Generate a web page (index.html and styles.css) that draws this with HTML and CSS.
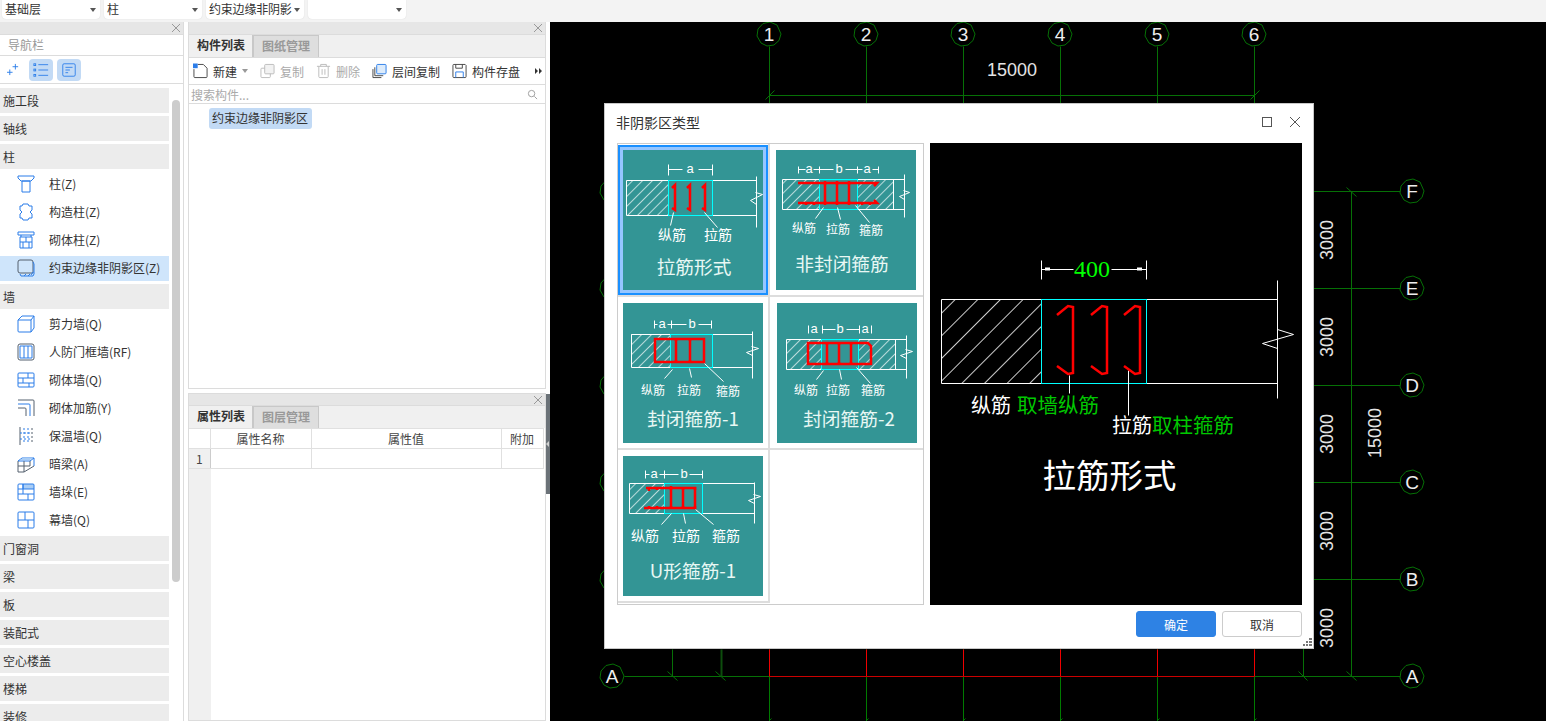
FILE: index.html
```html
<!DOCTYPE html>
<html lang="zh-CN">
  <head>
    <meta charset="UTF-8" />
    <title>非阴影区类型</title>
    <link rel="stylesheet" href="styles.css">
  </head>
  <body>
    <svg class="defs" width="0" height="0">
      <defs>
        <pattern id="hatchSmall" patternUnits="userSpaceOnUse" width="7" height="7" patternTransform="rotate(45)">
          <line x1="0" y1="0" x2="0" y2="7" stroke="#fff" stroke-width="1.3" />
        </pattern>
        <pattern id="hatchBig" patternUnits="userSpaceOnUse" width="16" height="16" patternTransform="rotate(45)">
          <line x1="0" y1="0" x2="0" y2="16" stroke="#fff" stroke-width="1.6" />
        </pattern>
        <polygon id="axisNode" points="12,0 10,6.5 5,11 -2,12 -8,9 -12,2 -11,-5 -6,-10.500 1,-12 8,-9" />
        <path id="closeMark" d="M1 1l8 8M9 1L1 9" />
      </defs>
    </svg>

    <div class="topbar">
      <div class="select">基础层<i class="caret"></i></div>
      <div class="select">柱<i class="caret"></i></div>
      <div class="select select-tight">约束边缘非阴影<i class="caret"></i></div>
      <div class="select"><i class="caret"></i></div>
    </div>

    <div class="main">
      <div class="nav">
        <div class="panel-head"><svg class="close" viewBox="0 0 10 10"><use href="#closeMark" /></svg></div>
        <div class="nav-title">导航栏</div>
        <div class="nav-tools">
          <svg class="nav-spark" viewBox="0 0 14 14"><path d="M9 1v6M6 4h6M3 7v6M0 10h6" /></svg>
          <span class="nav-tool">
            <svg viewBox="0 0 18 18"><path d="M6 3h11M6 9h11M6 15h11" /><rect x="1" y="2" width="2" height="2" /><rect x="1" y="8" width="2" height="2" /><rect x="1" y="14" width="2" height="2" /></svg>
          </span>
          <span class="nav-tool">
            <svg viewBox="0 0 18 18"><rect x="2" y="2" width="14" height="14" rx="1.500" /><path d="M5 6h8M5 9h5M5 12h3" /></svg>
          </span>
        </div>
        <div class="nav-list">
          <div class="nav-group">施工段</div>
          <div class="nav-group">轴线</div>
          <div class="nav-group">柱</div>
          <div class="nav-item">
            <svg class="icon" viewBox="0 0 18 18"><path d="M1 1h16v2l-3 3H4L1 3zM5 6h8v11H5z" /></svg>柱(Z)
          </div>
          <div class="nav-item">
            <svg class="icon" viewBox="0 0 18 18"><path d="M6 1h5l1 2h3v4l-2 2 2 2v4h-3l-1 2H6l-1-2H3v-4l2-2-2-2V3h2z" /></svg>构造柱(Z)
          </div>
          <div class="nav-item">
            <svg class="icon" viewBox="0 0 18 18"><path d="M1 1h16v3H1zM4 4v2M14 4v2M3 6h12v11H3zM3 11h12M9 6v5M6 11v6M12 11v6" /></svg>砌体柱(Z)
          </div>
          <div class="nav-item active">
            <svg class="icon" viewBox="0 0 18 18"><path class="dark" d="M3 1h11a2 2 0 0 1 2 2v11H3a2 2 0 0 1-2-2V3a2 2 0 0 1 2-2z" /><path d="M3 15l1 2h12l1-2V5l-1-2M7 17l2-2M11 17l2-2M14 16l2-3" /></svg>约束边缘非阴影区(Z)
          </div>
          <div class="nav-group">墙</div>
          <div class="nav-item">
            <svg class="icon" viewBox="0 0 18 18"><path d="M1 5h13v12H2a1 1 0 0 1-1-1zM1 5l4-4h12v12l-3 4M14 5l3-4" /></svg>剪力墙(Q)
          </div>
          <div class="nav-item">
            <svg class="icon" viewBox="0 0 18 18"><rect class="dark" x="1" y="1" width="16" height="16" rx="2" /><path d="M3 3h12v12H3zM7 3v12M11 3v12" /></svg>人防门框墙(RF)
          </div>
          <div class="nav-item">
            <svg class="icon" viewBox="0 0 18 18"><rect x="1" y="2" width="16" height="14" rx="1" /><path d="M1 7h16M1 12h16M11 2v5M6 7v5M12 12v4" /></svg>砌体墙(Q)
          </div>
          <div class="nav-item">
            <svg class="icon" viewBox="0 0 18 18"><path class="dark" d="M1 1h15a1 1 0 0 1 1 1v15" /><path d="M1 5h11a1 1 0 0 1 1 1v11" /><path class="dark" d="M1 9h7a1 1 0 0 1 1 1v7" /></svg>砌体加筋(Y)
          </div>
          <div class="nav-item">
            <svg class="icon" viewBox="0 0 18 18"><path class="dark" d="M3 0v18" /><path stroke-dasharray="2 2" d="M7 1v16M11 1v16M3 6h12M3 12h12" /><path class="dark" stroke-dasharray="2 2" d="M15 1v16" /></svg>保温墙(Q)
          </div>
          <div class="nav-item">
            <svg class="icon" viewBox="0 0 18 18"><path d="M1 6l4-3h12v8M1 6h12l4-3" /><path class="fill" d="M3 5l3-2h10l-3 2z" /><path class="dark" d="M1 6v11h6l10-6M7 6v11M1 11h12M13 6v5" /></svg>暗梁(A)
          </div>
          <div class="nav-item">
            <svg class="icon" viewBox="0 0 18 18"><path class="fill" d="M6 1h11v5H6z" /><rect x="1" y="1" width="16" height="16" rx="1" /><path d="M1 6h16M1 11h16M6 1v10M11 11v6M6 1v5" /></svg>墙垛(E)
          </div>
          <div class="nav-item">
            <svg class="icon" viewBox="0 0 18 18"><rect x="1" y="1" width="16" height="16" rx="1" /><path d="M1 9h16M8 1v8M11 9v8" /></svg>幕墙(Q)
          </div>
          <div class="nav-group">门窗洞</div>
          <div class="nav-group">梁</div>
          <div class="nav-group">板</div>
          <div class="nav-group">装配式</div>
          <div class="nav-group">空心楼盖</div>
          <div class="nav-group">楼梯</div>
          <div class="nav-group">装修</div>
        </div>
        <div class="nav-scroll"></div>
      </div>

      <div class="panels">
        <div class="panel panel-list">
          <div class="panel-head"><svg class="close" viewBox="0 0 10 10"><use href="#closeMark" /></svg></div>
          <div class="tabs">
            <div class="tab active">构件列表</div>
            <div class="tab">图纸管理</div>
          </div>
          <div class="toolbar">
            <div class="tool">
              <svg class="tool-icon" viewBox="0 0 16 16"><path class="dark" d="M5 1h6l4 4v9a1 1 0 0 1-1 1H2a1 1 0 0 1-1-1V6" /><rect class="blue-fill" x="0" y="0" width="5" height="5" /></svg>
              新建<i class="caret caret-soft"></i>
            </div>
            <div class="tool off">
              <svg class="tool-icon" viewBox="0 0 16 16"><rect x="1" y="5" width="10" height="10" rx="1" /><rect class="soft-fill" x="5" y="1" width="10" height="10" rx="1" /></svg>
              复制
            </div>
            <div class="tool off">
              <svg class="tool-icon" viewBox="0 0 16 16"><path d="M1 3h14M5 3V1h6v2M3 3v11a1 1 0 0 0 1 1h8a1 1 0 0 0 1-1V3M6.500 6v6M9.500 6v6" /></svg>
              删除
            </div>
            <div class="tool">
              <svg class="tool-icon" viewBox="0 0 16 16"><path class="dark" d="M1 6v9h9M3 4v9h9" /><rect class="blue-box" x="5" y="1" width="10" height="10" rx="1" /></svg>
              层间复制
            </div>
            <div class="tool">
              <svg class="tool-icon" viewBox="0 0 16 16"><path class="dark" d="M1 2a1 1 0 0 1 1-1h12l1 1v12a1 1 0 0 1-1 1H2a1 1 0 0 1-1-1zM4 1v4h7V1" /><path class="blue-line" d="M4 15V9h8v6" /></svg>
              构件存盘
            </div>
            <svg class="more" viewBox="0 0 8 8"><path d="M1 1l3 3-3 3zM5 1l3 3-3 3z" /></svg>
          </div>
          <div class="search">
            <input class="search-input" type="text" placeholder="搜索构件..." />
            <svg class="search-icon" viewBox="0 0 12 12"><circle cx="5" cy="5" r="3.500" /><path d="M8 8l3 3" /></svg>
          </div>
          <div class="tree">
            <span class="tree-node">约束边缘非阴影区</span>
          </div>
        </div>

        <div class="panel panel-props">
          <div class="panel-head"><svg class="close" viewBox="0 0 10 10"><use href="#closeMark" /></svg></div>
          <div class="tabs">
            <div class="tab active">属性列表</div>
            <div class="tab">图层管理</div>
          </div>
          <table class="props-table">
            <thead>
              <tr><th class="col-no"></th><th class="col-name">属性名称</th><th class="col-value">属性值</th><th class="col-extra">附加</th></tr>
            </thead>
            <tbody>
              <tr><td class="row-no">1</td><td></td><td></td><td></td></tr>
            </tbody>
          </table>
          <div class="props-rest"><div class="props-gutter"></div></div>
        </div>
      </div>

      <div class="splitter"><div class="splitter-handle"></div></div>

      <div class="canvas">
        <svg class="drawing" viewBox="550 22 996 699">
          <g class="axis">
            <path d="M769 46V649M866 46V649M963 46V649M1060 46V649M1157 46V649M1254 46V649" />
            <path d="M769 95H1254M765 99l9-9M1250 99l9-9" />
            <path d="M624 191H1400M624 288H1400M624 385H1400M624 482H1400M624 579H1400" />
            <path d="M1351 191V676M1346 187l10 9M1303 640V676M1298 671l9 9M1346 671l10 9" />
            <path d="M624 676H769M1254 676H1400M667 671l10 9M715 671l10 9M672 649V676" />
            <path class="axis-thick" d="M721 649V676" />
            <path class="axis-low" d="M769 676V721M866 676V721M963 676V721M1060 676V721M1157 676V721M1254 676V721M769 720l2-2M866 720l2-2M963 720l2-2M1060 720l2-2M1157 720l2-2M1254 720l2-2" />
          </g>
          <path class="axis-red" d="M769 649V676M866 649V676M963 649V676M1060 649V676M1157 649V676M1254 649V676" />
          <path class="axis-red axis-red-low" d="M769 676H1254" />
          <g class="nodes">
            <use href="#axisNode" x="769" y="34" /><use href="#axisNode" x="866" y="34" />
            <use href="#axisNode" x="963" y="34" /><use href="#axisNode" x="1060" y="34" />
            <use href="#axisNode" x="1157" y="34" /><use href="#axisNode" x="1254" y="34" />
            <use href="#axisNode" x="1412" y="191" /><use href="#axisNode" x="1412" y="288" />
            <use href="#axisNode" x="1412" y="385" /><use href="#axisNode" x="1412" y="482" />
            <use href="#axisNode" x="1412" y="579" /><use href="#axisNode" x="1412" y="676" />
            <use href="#axisNode" x="612" y="191" /><use href="#axisNode" x="612" y="288" />
            <use href="#axisNode" x="612" y="385" /><use href="#axisNode" x="612" y="482" />
            <use href="#axisNode" x="612" y="579" /><use href="#axisNode" x="612" y="676" />
          </g>
          <g class="node-text">
            <text x="769" y="41">1</text><text x="866" y="41">2</text><text x="963" y="41">3</text>
            <text x="1060" y="41">4</text><text x="1157" y="41">5</text><text x="1254" y="41">6</text>
            <text x="1412" y="198">F</text><text x="1412" y="295">E</text><text x="1412" y="392">D</text>
            <text x="1412" y="489">C</text><text x="1412" y="586">B</text><text x="1412" y="683">A</text>
            <text x="612" y="683">A</text>
          </g>
          <g class="dim-text">
            <text x="1012" y="76">15000</text>
            <text transform="translate(1333 240) rotate(-90)">3000</text>
            <text transform="translate(1333 337) rotate(-90)">3000</text>
            <text transform="translate(1333 434) rotate(-90)">3000</text>
            <text transform="translate(1333 531) rotate(-90)">3000</text>
            <text transform="translate(1333 628) rotate(-90)">3000</text>
            <text transform="translate(1381 433) rotate(-90)">15000</text>
          </g>
        </svg>

        <div class="dialog">
          <div class="dialog-head">
            <span class="dialog-title">非阴影区类型</span>
            <span class="win-max"></span>
            <svg class="win-close" viewBox="0 0 12 12"><path d="M1 1l10 10M11 1L1 11" /></svg>
          </div>
          <div class="dialog-body">
            <div class="gallery">
              <div class="thumb-cell">
                <svg class="thumb selected" viewBox="0 0 140 140">
                  <rect class="fig-hatch" x="3" y="30" width="42" height="35" />
                  <path class="fig-line" d="M3 30H133M3 65H133M3 30V65M133 26V77M133 47l6-3-7-2M133 47l-6 3 6 4" />
                  <rect class="fig-cyan" x="45" y="30" width="44" height="35" />
                  <path class="fig-line" d="M45 14V25M89 14V25M45 19H59M75 19H89M50 62l-3 13M81 62l13 15" />
                  <path class="fig-red" d="M49 38l3-3V60l-3-2M64 38l3-3V60l-3-2M79 38l3-3V60l-3-2" />
                  <text class="fig-mini" x="67" y="23">a</text>
                  <text class="fig-label" x="49" y="90">纵筋</text>
                  <text class="fig-label" x="95" y="90">拉筋</text>
                  <text class="fig-title" x="71" y="124">拉筋形式</text>
                </svg>
              </div>
              <div class="thumb-cell">
                <svg class="thumb" viewBox="0 0 140 140">
                  <rect class="fig-hatch" x="6" y="29" width="37" height="30" />
                  <rect class="fig-hatch" x="81" y="29" width="36" height="30" />
                  <path class="fig-line" d="M6 29H128M6 59H128M6 29V59M117 29V59M128 24V67M128 44l5-2-6-2M128 44l-5 2 5 3" />
                  <rect class="fig-cyan" x="43" y="29" width="38" height="30" />
                  <path class="fig-line" d="M22 16V23M43 16V23M81 16V23M102 16V23M22 19H29M37 19H57M69 19H86M96 19H102M47 57l-8 11M61 57l3 12M79 55l14 17" />
                  <path class="fig-red" d="M22 33H101l-3 3M22 53H101l-3-3M49 33V53M61 33V53M73 33V53" />
                  <path class="fig-red" d="M30 52v3M38 52v3M49 31v4M61 31v4M73 31v4M49 51v4M61 51v4M73 51v4M86 52v3M94 52v3" />
                  <text class="fig-mini" x="33" y="23">a</text>
                  <text class="fig-mini" x="63" y="23">b</text>
                  <text class="fig-mini" x="91" y="23">a</text>
                  <text class="fig-label small" x="28" y="83">纵筋</text>
                  <text class="fig-label small" x="62" y="84">拉筋</text>
                  <text class="fig-label small" x="95" y="85">箍筋</text>
                  <text class="fig-title" x="66" y="121">非封闭箍筋</text>
                </svg>
              </div>
              <div class="thumb-cell">
                <svg class="thumb" viewBox="0 0 140 140">
                  <rect class="fig-hatch" x="8" y="31" width="39" height="33" />
                  <path class="fig-line" d="M8 31H129M8 64H129M8 31V64M129 28V75M129 47l6-2-7-2M129 47l-6 2 6 3" />
                  <rect class="fig-cyan" x="47" y="31" width="42" height="33" />
                  <path class="fig-line" d="M31 17V25M48 17V25M88 17V25M31 21H34M44 21H48M48 21H63M75 21H88M49 66l-8 9M66 65l2 9M81 60l19 18" />
                  <path class="fig-red" d="M32 36H81V59H32zM53 36V59M67 36V59" />
                  <path class="fig-red" d="M53 35v3M67 35v3M53 57v3M67 57v3" />
                  <text class="fig-mini" x="39" y="25">a</text>
                  <text class="fig-mini" x="69" y="25">b</text>
                  <text class="fig-label small" x="30" y="92">纵筋</text>
                  <text class="fig-label small" x="66" y="92">拉筋</text>
                  <text class="fig-label small" x="105" y="93">箍筋</text>
                  <text class="fig-title" x="70" y="123">封闭箍筋-1</text>
                </svg>
              </div>
              <div class="thumb-cell">
                <svg class="thumb" viewBox="0 0 140 140">
                  <rect class="fig-hatch" x="9" y="36" width="35" height="30" />
                  <rect class="fig-hatch" x="81" y="36" width="37" height="30" />
                  <path class="fig-line" d="M9 36H129M9 66H129M9 36V66M118 36V66M129 32V75M129 50l6-2-7-2M129 50l-6 2 6 3" />
                  <rect class="fig-cyan" x="44" y="36" width="37" height="30" />
                  <path class="fig-line" d="M31 22V30M45 22V30M82 22V30M94 22V30M45 26H58M69 26H82M46 67l-7 9M62 66l2 10M79 64l14 16" />
                  <path class="fig-red" d="M31 40H91l3 3V61H31zM50 40V61M62 40V61M74 40V61" />
                  <path class="fig-red" d="M50 39v3M62 39v3M74 39v3M50 59v3M62 59v3M74 59v3" />
                  <text class="fig-mini" x="37" y="30">a</text>
                  <text class="fig-mini" x="63" y="30">b</text>
                  <text class="fig-mini" x="88" y="30">a</text>
                  <text class="fig-label small" x="29" y="92">纵筋</text>
                  <text class="fig-label small" x="61" y="92">拉筋</text>
                  <text class="fig-label small" x="96" y="92">箍筋</text>
                  <text class="fig-title" x="72" y="123">封闭箍筋-2</text>
                </svg>
              </div>
              <div class="thumb-cell">
                <svg class="thumb" viewBox="0 0 140 140">
                  <rect class="fig-hatch" x="6" y="27" width="35" height="30" />
                  <path class="fig-line" d="M6 27H131M6 57H131M6 27V57M131 26V67M131 42l6-2-7-2M131 42l-6 2 6 3" />
                  <rect class="fig-cyan" x="41" y="27" width="38" height="30" />
                  <path class="fig-line" d="M22 14V22M41 14V22M79 14V22M22 18H26M36 18H55M66 18H79M48 57l-10 11M60 57l2 10M72 53l18 15" />
                  <path class="fig-red" d="M23 32H72V52H21M48 32V52M60 32V52" />
                  <path class="fig-red" d="M26 31v4M34 31v3M48 30v4M60 31v3M72 31v3M26 50v3M34 50v3M48 50v3M60 50v3M72 50v3" />
                  <text class="fig-mini" x="31" y="22">a</text>
                  <text class="fig-mini" x="61" y="22">b</text>
                  <text class="fig-label" x="22" y="85">纵筋</text>
                  <text class="fig-label" x="63" y="85">拉筋</text>
                  <text class="fig-label" x="103" y="85">箍筋</text>
                  <text class="fig-title" x="70" y="122">U形箍筋-1</text>
                </svg>
              </div>
            </div>

            <svg class="preview" viewBox="0 0 372 462">
              <rect class="big-hatch" x="11" y="156" width="100" height="84" />
              <path class="fig-line" d="M11 156H347M11 240H347M11 156V240M347 137V255M347 186l16 5-31 9 15 5" />
              <rect class="fig-cyan" x="111" y="156" width="105" height="84" />
              <path class="fig-line" d="M111 117V136M216 117V136M111 126H143M181 126H216M139 232V250M198 227V272" />
              <path class="fig-dot" d="M115 126h5M207 126h5" />
              <path class="big-red" d="M127 172l11-9 5 1V230l-5 1-11-8M161 172l11-9 5 1V230l-5 1-11-8M194 172l11-9 5 1V230l-5 1-11-8" />
              <text class="pre-num" x="162" y="134">400</text>
              <text class="pre-label" x="41" y="270">纵筋</text>
              <text class="pre-green" x="87" y="270">取墙纵筋</text>
              <text class="pre-label" x="182" y="290">拉筋</text>
              <text class="pre-green" x="222" y="290">取柱箍筋</text>
              <text class="pre-title" x="179.500" y="345">拉筋形式</text>
            </svg>
          </div>
          <div class="dialog-foot">
            <button class="btn btn-primary">确定</button>
            <button class="btn">取消</button>
          </div>
          <svg class="grip" viewBox="0 0 9 9"><path d="M6 0h3v2H6zM3 3h2v2H3zM6 3h3v2H6zM0 6h2v2H0zM3 6h2v2H3zM6 6h3v2H6z" /></svg>
        </div>
      </div>
    </div>
  </body>
</html>
```

FILE: styles.css
```css
* {
  box-sizing: border-box;
}

html,
body {
  margin: 0;
  height: 100%;
  overflow: hidden;
}

body {
  display: flex;
  flex-direction: column;
  background: #fff;
  color: #333;
  font-family: "Noto Sans CJK SC", sans-serif;
  font-size: 12px;
}

.defs {
  position: absolute;
}

/* top selects */
.topbar {
  display: flex;
  gap: 4px;
  flex: 0 0 22px;
  padding-left: 2px;
  background: #f3f3f3;
}

.select {
  position: relative;
  width: 98px;
  height: 19px;
  padding-left: 3px;
  line-height: 18px;
  background: #fff;
  border-radius: 0 0 4px 4px;
  box-shadow: 0 0 1px #ccc;
}

.select-tight {
  letter-spacing: -0.2px;
}

.caret {
  position: absolute;
  right: 4px;
  top: 8px;
  border-top: 4px solid #555;
  border-left: 3px solid transparent;
  border-right: 3px solid transparent;
}

.main {
  display: flex;
  flex: 1;
  min-height: 0;
}

/* left navigation */
.nav {
  position: relative;
  flex: 0 0 184px;
  margin-right: 4px;
  border-right: 1px solid #dcdcdc;
  overflow: hidden;
}

.panel-head {
  position: relative;
  height: 12px;
  background: #e6e6e6;
}

.close {
  position: absolute;
  right: 2px;
  top: 1px;
  width: 10px;
  height: 10px;
  fill: none;
  stroke: #999;
}

.nav-title {
  height: 22px;
  padding-left: 8px;
  line-height: 19px;
  color: #999;
  border-top: 1px solid #dcdcdc;
  border-bottom: 1px solid #dcdcdc;
}

.nav-tools {
  display: flex;
  align-items: center;
  height: 28px;
  padding-left: 7px;
  border-bottom: 1px solid #dcdcdc;
}

.nav-spark {
  width: 13px;
  height: 13px;
  margin-right: 9px;
  fill: none;
  stroke: #2b7de9;
}

.nav-tool {
  display: flex;
  align-items: center;
  justify-content: center;
  width: 24px;
  height: 22px;
  margin-right: 4px;
  background: #c2daf5;
  border-radius: 4px;
}

.nav-tool svg {
  width: 16px;
  height: 16px;
  fill: none;
  stroke: #2b7de9;
}

.nav-list {
  padding-top: 4px;
  width: 169px;
}

.nav-group,
.nav-item {
  display: flex;
  align-items: center;
  height: 25px;
  margin-bottom: 3px;
  white-space: nowrap;
}

.nav-group {
  padding-left: 3px;
  background: #ececec;
}

.nav-item {
  padding-left: 17px;
  padding-bottom: 2px;
}

.nav-item.active {
  background: #cfe5fb;
}

.icon {
  width: 18px;
  height: 18px;
  margin-right: 14px;
  fill: none;
  stroke: #2b7de9;
}

.icon .dark {
  stroke: #55606e;
}

.icon .fill {
  fill: #a9cdf5;
  stroke: none;
}

.nav-scroll {
  position: absolute;
  left: 172px;
  top: 78px;
  width: 8px;
  height: 482px;
  background: #ccc;
  border-radius: 4px;
}

/* middle panels */
.panels {
  display: flex;
  flex-direction: column;
  gap: 4px;
  flex: 0 0 358px;
}

.panel {
  display: flex;
  flex-direction: column;
  border: 1px solid #dcdcdc;
  border-top: none;
}

.panel-list {
  height: 367px;
}

.panel-props {
  flex: 1;
  min-height: 0;
  border-top: 1px solid #dcdcdc;
}

.panel-props .panel-head {
  height: 11px;
}

.tabs {
  display: flex;
  flex: 0 0 23px;
  background: #f0f0f0;
  border-top: 1px solid #dcdcdc;
}

.tab {
  width: 66px;
  padding-left: 8px;
  line-height: 20px;
  font-weight: 700;
  color: #999;
  background: #dedede;
  border: 1px solid #c8c8c8;
  border-bottom: none;
}

.tab.active {
  width: 64px;
  color: #333;
  background: #f0f0f0;
  border: none;
  border-right: 1px solid #c8c8c8;
}

.toolbar {
  position: relative;
  display: flex;
  align-items: center;
  gap: 12px;
  height: 28px;
  padding-left: 4px;
  border-top: 1px solid #dcdcdc;
  border-bottom: 1px solid #dcdcdc;
}

.tool {
  position: relative;
  display: flex;
  align-items: center;
  gap: 5px;
}

.tool.off {
  color: #aaa;
}

.tool-icon {
  width: 15px;
  height: 16px;
  fill: none;
  stroke: #bbb;
}

.tool-icon .dark {
  stroke: #444;
}

.tool-icon .blue-fill {
  fill: #2b7de9;
  stroke: none;
}

.tool-icon .soft-fill {
  fill: #f2f2f2;
}

.tool-icon .blue-box {
  fill: #dcebfb;
  stroke: #2b7de9;
}

.tool-icon .blue-line {
  stroke: #2b7de9;
}

.caret-soft {
  position: static;
  border-top-color: #999;
  margin-left: 0;
}

.more {
  position: absolute;
  right: 3px;
  top: 9px;
  width: 8px;
  height: 8px;
  fill: #333;
}

.search {
  position: relative;
  height: 19px;
  border-bottom: 1px solid #dcdcdc;
}

.search-input {
  display: block;
  width: 100%;
  height: 18px;
  padding: 0 2px;
  border: none;
  outline: 0;
  background: none;
  font: inherit;
}

.search-input::placeholder {
  color: #aaa;
}

.search-icon {
  position: absolute;
  right: 7px;
  top: 4px;
  width: 11px;
  height: 11px;
  fill: none;
  stroke: #999;
}

.tree {
  padding: 4px 0 0 20px;
}

.tree-node {
  display: inline-block;
  width: 103px;
  height: 21px;
  padding-left: 3px;
  line-height: 20px;
  background: #c2daf5;
  border-radius: 3px;
}

.props-table {
  width: 354px;
  table-layout: fixed;
  border-collapse: collapse;
}

.props-table th,
.props-table td {
  height: 20px;
  padding: 0;
  font-weight: 400;
  text-align: center;
  color: #444;
  border: 1px solid #e0e0e0;
  border-left: none;
}

.col-no {
  width: 21px;
}

.col-name {
  width: 101px;
}

.col-value {
  width: 190px;
}

.col-extra {
  width: 42px;
}

.props-table .row-no {
  background: #f0f0f0;
  border-right-color: #ccc;
}

.props-rest {
  flex: 1;
}

.props-gutter {
  width: 22px;
  height: 100%;
  background: #f0f0f0;
}

.splitter {
  flex: 0 0 4px;
  padding-top: 372px;
}

.splitter-handle {
  display: flex;
  align-items: center;
  height: 100px;
  background: #6b7278;
}

.splitter-handle::before {
  content: "";
  border-right: 3px solid #d0d0d0;
  border-top: 3px solid transparent;
  border-bottom: 3px solid transparent;
}

/* drawing: half pixel shift keeps 1px lines sharp */
.canvas {
  position: relative;
  flex: 1;
  background: #000;
  overflow: hidden;
}

.drawing {
  display: block;
  width: 996px;
  height: 699px;
  font-family: "Liberation Sans", sans-serif;
}

.axis {
  fill: none;
  stroke: #067006;
  stroke-width: 1;
  transform: translate(0.5px, 0.5px);
}

.axis .axis-thick {
  stroke: #0d4d0d;
  stroke-width: 2;
}

.axis .axis-low {
  stroke: #007a00;
}

.axis-red {
  fill: none;
  stroke: #f00000;
  transform: translate(0.5px, 0.5px);
}

.axis-red-low {
  stroke: #cc0000;
}

.nodes {
  fill: #000;
  stroke: #067006;
}

.node-text {
  fill: #eee;
  font-size: 19px;
  text-anchor: middle;
}

.dim-text {
  fill: #e4e4e4;
  font-size: 18px;
  text-anchor: middle;
}

/* dialog */
.dialog {
  position: absolute;
  left: 54px;
  top: 81px;
  width: 710px;
  height: 546px;
  padding: 0 10px 0 12px;
  background: #fff;
  border: 1px solid #c8c8c8;
}

.dialog-head {
  position: relative;
  height: 39px;
  line-height: 36px;
  font-size: 14px;
}

.dialog-title {
  margin-left: -1px;
}

.win-max {
  position: absolute;
  right: 31px;
  top: 13px;
  width: 10px;
  height: 10px;
  border: 1px solid #555;
}

.win-close {
  position: absolute;
  right: 2px;
  top: 12px;
  width: 12px;
  height: 12px;
  fill: none;
  stroke: #555;
}

.dialog-body {
  display: flex;
  gap: 6px;
}

.gallery {
  display: grid;
  grid-template-columns: 152px 153px;
  grid-auto-rows: 153px;
  align-content: start;
  width: 307px;
  height: 462px;
  border: 1px solid #ccc;
}

.thumb-cell {
  padding: 6px 0 0 5px;
  border-right: 2px solid #ddd;
  border-bottom: 2px solid #ddd;
}

.thumb-cell:nth-child(even) {
  padding-left: 6px;
  border-right: none;
}

.thumb-cell:nth-child(4) {
  padding-left: 7px;
}

.thumb {
  display: block;
  width: 140px;
  height: 140px;
  background: #339595;
}

.thumb.selected {
  box-shadow: 0 0 0 3px #96c6ff, 0 0 0 5px #1a90ff;
}

.fig-hatch {
  fill: url(#hatchSmall);
}

.big-hatch {
  fill: url(#hatchBig);
}

.fig-line {
  fill: none;
  stroke: #fff;
  stroke-width: 1;
  transform: translate(0.5px, 0.5px);
}

.fig-cyan {
  fill: none;
  stroke: #0ff;
  stroke-width: 1;
  transform: translate(0.5px, 0.5px);
}

.fig-red {
  fill: none;
  stroke: #f00;
  stroke-width: 2.5;
}

.fig-dot {
  fill: none;
  stroke: #fff;
  stroke-width: 3;
}

.big-red {
  fill: none;
  stroke: #f00;
  stroke-width: 2.5;
}

.fig-mini {
  fill: #fff;
  font-family: "Liberation Sans", sans-serif;
  font-size: 13px;
  text-anchor: middle;
}

.fig-label {
  fill: #fff;
  font-size: 14px;
  text-anchor: middle;
}

.fig-label.small {
  font-size: 12px;
}

.fig-title {
  fill: #e8f8f4;
  font-size: 18.7px;
  text-anchor: middle;
}

.preview {
  display: block;
  width: 372px;
  height: 462px;
  background: #000;
}

.pre-num {
  fill: #0f0;
  font-family: "Liberation Serif", serif;
  font-size: 24px;
  text-anchor: middle;
}

.pre-label {
  fill: #fff;
  font-size: 20px;
}

.pre-green {
  fill: #00c800;
  font-size: 20.500px;
}

.pre-title {
  fill: #fff;
  font-size: 33.500px;
  text-anchor: middle;
}

.dialog-foot {
  display: flex;
  justify-content: flex-end;
  gap: 6px;
  margin: 6px 1px 0 0;
}

.btn {
  width: 80px;
  height: 26px;
  padding: 0;
  color: #333;
  font: inherit;
  background: #fff;
  border: 1px solid #ccc;
  border-radius: 3px;
}

.btn-primary {
  color: #fff;
  background: #2e82e4;
  border-color: #2e82e4;
}

.grip {
  position: absolute;
  right: 1px;
  bottom: 1px;
  width: 9px;
  height: 9px;
  fill: #777;
}
```
